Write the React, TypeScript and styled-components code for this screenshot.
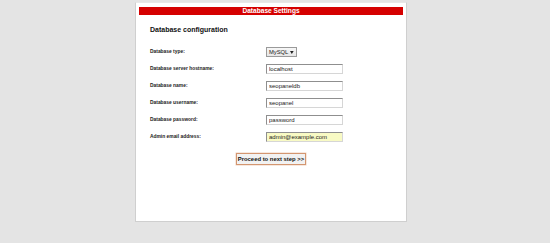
import React from "react";
import styled, { createGlobalStyle } from "styled-components";

const Global = createGlobalStyle`
  html, body {
    margin: 0;
    padding: 0;
    background: #e4e4e4;
    font-family: "Liberation Sans", Arial, sans-serif;
  }
`;

const Page = styled.div`
  width: 550px;
  height: 243px;
  overflow: hidden;
  padding-top: 2px;
  box-sizing: border-box;
`;

const Panel = styled.div`
  margin-left: 135px;
  width: 272px;
  height: 220px;
  box-sizing: border-box;
  background: #ffffff;
  border: 1px solid #cfcfcf;
  border-top-color: #e8e8e8;
  padding: 4px 3px 0 3px;
  display: flex;
  flex-direction: column;
`;

const TitleBar = styled.div`
  height: 8px;
  background: #d50000;
  color: #ffffff;
  font-weight: bold;
  font-size: 6.6px;
  line-height: 8px;
  text-align: center;
`;

const Body = styled.div`
  padding: 10px 0 0 11px;
  display: flex;
  flex-direction: column;
`;

const Heading = styled.div`
  font-size: 7px;
  font-weight: bold;
  color: #111111;
  line-height: 9px;
  height: 9px;
`;

const Form = styled.div`
  margin-top: 9.7px;
  display: grid;
  grid-template-columns: 116px 1fr;
  grid-auto-rows: 17px;
  align-items: center;
  justify-items: start;
`;

const Label = styled.div`
  font-size: 4.9px;
  font-weight: bold;
  color: #222222;
  line-height: 6px;
`;

const Input = styled.input<{ $highlight?: boolean }>`
  display: block;
  box-sizing: border-box;
  width: 77px;
  height: 10px;
  margin: 0;
  padding: 0 2px;
  font-family: "Liberation Sans", Arial, sans-serif;
  font-size: 6px;
  color: #1a1a1a;
  background: ${(p) => (p.$highlight ? "#f8fac4" : "#ffffff")};
  border: 1px solid;
  border-color: #8f8f8f #d6d6d6 #d6d6d6 #8f8f8f;
  outline: none;
`;

const FakeSelect = styled.div`
  box-sizing: border-box;
  width: 31px;
  height: 10px;
  display: flex;
  align-items: center;
  gap: 2px;
  padding: 0 2px;
  font-size: 5.8px;
  color: #1a1a1a;
  background: linear-gradient(#f7f7f7, #e6e6e6);
  border: 1px solid #9a9a9a;
`;

const SelectArrow = styled.svg`
  width: 4px;
  height: 3px;
  margin-left: auto;
`;

const Actions = styled.div`
  margin-top: 7px;
  display: flex;
  justify-content: center;
  padding-right: 11px;
`;

const Button = styled.button`
  box-sizing: border-box;
  height: 12px;
  width: 70px;
  padding: 0;
  font-family: "Liberation Sans", Arial, sans-serif;
  font-size: 5.9px;
  font-weight: bold;
  color: #111111;
  background: #f2f2f2;
  border: 1px solid #d39670;
  box-shadow: 0 0 0 0.5px #f0d2c0;
  cursor: pointer;
`;

const fields: { label: string; value: string; highlight?: boolean }[] = [
  { label: "Database server hostname:", value: "localhost" },
  { label: "Database name:", value: "seopaneldb" },
  { label: "Database username:", value: "seopanel" },
  { label: "Database password:", value: "password" },
  { label: "Admin email address:", value: "admin@example.com", highlight: true },
];

export default function App() {
  return (
    <>
      <Global />
      <Page>
        <Panel>
          <TitleBar>Database Settings</TitleBar>
          <Body>
            <Heading>Database configuration</Heading>
            <Form>
              <Label>Database type:</Label>
              <FakeSelect>
                MySQL
                <SelectArrow viewBox="0 0 4 3">
                  <path d="M0 0 L4 0 L2 3 Z" fill="#222" />
                </SelectArrow>
              </FakeSelect>
              {fields.map((f) => (
                <React.Fragment key={f.label}>
                  <Label>{f.label}</Label>
                  <Input defaultValue={f.value} $highlight={f.highlight} readOnly />
                </React.Fragment>
              ))}
            </Form>
            <Actions>
              <Button>Proceed to next step &gt;&gt;</Button>
            </Actions>
          </Body>
        </Panel>
      </Page>
    </>
  );
}
